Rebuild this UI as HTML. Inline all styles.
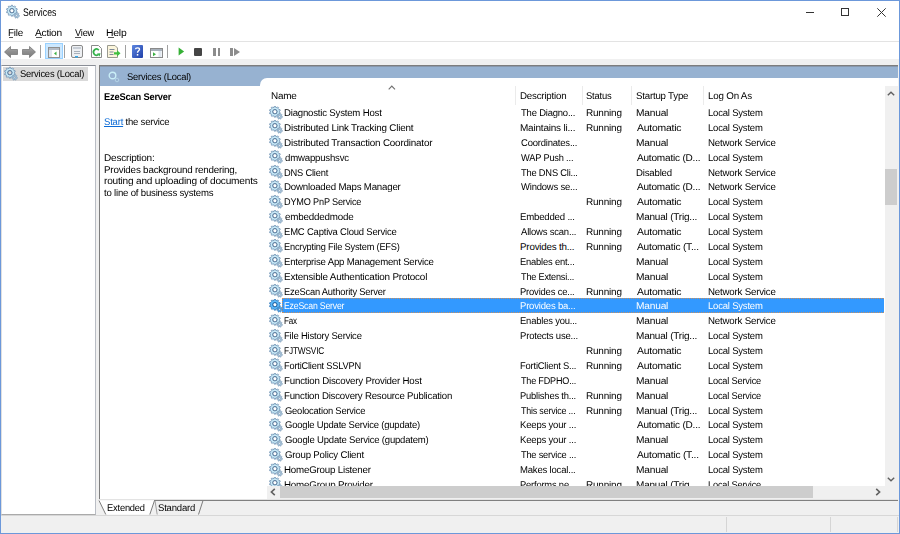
<!DOCTYPE html>
<html><head><meta charset="utf-8">
<style>
*{margin:0;padding:0;box-sizing:border-box}
html,body{width:900px;height:534px;overflow:hidden;background:#f0f0f0}
body{position:relative;font-family:"Liberation Sans",sans-serif;color:#000;font-size:9.8px;letter-spacing:-0.2px;text-rendering:geometricPrecision}
.abs{position:absolute}
svg.abs{overflow:visible}
.t{position:absolute;white-space:nowrap;line-height:1;transform-origin:0 0}
#win{position:absolute;left:0;top:0;width:900px;height:534px;border:1px solid #6c98da}
#title{position:absolute;left:1px;top:1px;width:898px;height:40px;background:#fff}
#tbsep{position:absolute;left:1px;top:41px;width:898px;height:1px;background:#e3e3e3}
#tool{position:absolute;left:1px;top:42px;width:898px;height:17px;background:#fff}
#lp{position:absolute;left:1px;top:65px;width:95px;height:450px;background:#fff;border-top:1px solid #8a8e96;border-left:1px solid #e0e0e0;border-right:1px solid #b9bdc4;border-bottom:1px solid #aaaaaa}
#rp{position:absolute;left:99px;top:65px;width:799px;height:435px;background:#fff;border-top:1px solid #7d7d7d;border-left:1px solid #7d7d7d}
#hdr{position:absolute;left:100px;top:66px;width:798px;height:20px;background:#97b2d1;border-top:1px solid #8898ad}
#listbg{position:absolute;left:260px;top:78px;width:638px;height:20px;background:#fff;border-top-left-radius:7px}
.row{position:absolute;left:266px;width:618px;height:15px}
.row span{position:absolute;top:4px;white-space:nowrap;line-height:1;transform-origin:0 0}
.row .ic{position:absolute;left:3px;top:0.5px;width:14px;height:14px}
.row .ic svg{display:block}
.c0{left:18px}.c1{left:255px}.c2{left:321px}.c3{left:371px}.c4{left:443px}
.row.sel span{color:#fff}
.row.sel .ic svg{filter:url(#tint)}
.row.sel .hl{position:absolute;left:16px;top:0;right:0;height:15px;background:#3399ff;border:1px dotted #c89060;border-right:none}
.colh{position:absolute;top:92px;white-space:nowrap;line-height:1}
.csep{position:absolute;top:86px;width:1px;height:19px;background:#ebebeb}
.tsep{position:absolute;top:45px;width:1px;height:13px;background:#a0a0a0}
.ssep{position:absolute;top:517px;width:1px;height:15px;background:#d5d5d5}
</style></head><body>
<svg width="0" height="0" style="position:absolute">
<defs>
<g id="gear">
 <path d="M5.20 1.26L5.25 0.24L6.55 0.24L6.60 1.26L7.94 1.69L8.59 0.90L9.63 1.66L9.08 2.52L9.91 3.66L10.89 3.40L11.29 4.63L10.34 5.00L10.34 6.40L11.29 6.77L10.89 8.00L9.91 7.74L9.08 8.88L9.63 9.74L8.59 10.50L7.94 9.71L6.60 10.14L6.55 11.16L5.25 11.16L5.20 10.14L3.86 9.71L3.21 10.50L2.17 9.74L2.72 8.88L1.89 7.74L0.91 8.00L0.51 6.77L1.46 6.40L1.46 5.00L0.51 4.63L0.91 3.40L1.89 3.66L2.72 2.52L2.17 1.66L3.21 0.90L3.86 1.69ZM3.90 5.70a2.0 2.0 0 1 0 4.0 0a2.0 2.0 0 1 0 -4.0 0Z" fill="#b2d8ee" fill-rule="evenodd" stroke="#7393b2" stroke-width="0.8"/>
 <circle cx="5.9" cy="5.7" r="2.3" fill="none" stroke="#6582a1" stroke-width="1"/>
 <circle cx="5.9" cy="5.7" r="3.5" fill="none" stroke="#cdeefa" stroke-width="1"/>
 <path d="M10.11 8.26L10.11 7.54L11.09 7.54L11.09 8.26L11.97 8.68L12.53 8.24L13.14 9.00L12.58 9.45L12.80 10.40L13.50 10.56L13.28 11.51L12.58 11.35L11.97 12.12L12.28 12.77L11.40 13.19L11.09 12.54L10.11 12.54L9.80 13.19L8.92 12.77L9.23 12.12L8.62 11.35L7.92 11.51L7.70 10.56L8.40 10.40L8.62 9.45L8.06 9.00L8.67 8.24L9.23 8.68ZM9.70 10.40a0.9 0.9 0 1 0 1.8 0a0.9 0.9 0 1 0 -1.8 0Z" fill="#a3c2da" fill-rule="evenodd" stroke="#7f9db8" stroke-width="0.6"/>
</g>
<filter id="tint" color-interpolation-filters="sRGB"><feColorMatrix type="matrix" values="0.45 0 0 0 0  0 0.78 0 0 0.02  0 0 1 0 0.02  0 0 0 1 0"/></filter>
<linearGradient id="arrg" x1="0" y1="0" x2="0" y2="1"><stop offset="0" stop-color="#b0b0b0"/><stop offset="0.45" stop-color="#909090"/><stop offset="1" stop-color="#7c7c7c"/></linearGradient>
<linearGradient id="helpg" x1="0" y1="0" x2="1" y2="1"><stop offset="0" stop-color="#5d86e0"/><stop offset="1" stop-color="#1f3fa8"/></linearGradient>
</defs></svg>
<div id="win"></div>
<div id="title"></div>
<div id="tbsep"></div>
<div id="tool"></div>
<div id="lp"></div>
<div id="rp"></div>
<div id="hdr"></div>
<div id="listbg"></div>

<!-- title bar -->
<svg class="abs" style="left:6px;top:5px" width="14" height="14" viewBox="0 0 14 14"><use href="#gear"/></svg>
<div class="abs" style="left:806px;top:12px;width:8px;height:1px;background:#333"></div>
<div class="abs" style="left:841px;top:8px;width:8px;height:8px;border:1px solid #333"></div>
<svg class="abs" style="left:877px;top:8px" width="9" height="9" viewBox="0 0 9 9"><path d="M0.3 0.3L8.7 8.7M8.7 0.3L0.3 8.7" stroke="#333" stroke-width="1"/></svg>

<!-- menu -->
<div class="abs" style="left:9px;top:37px;width:4px;height:1px;background:#555"></div>
<div class="abs" style="left:35.5px;top:37px;width:6px;height:1px;background:#555"></div>
<div class="abs" style="left:75px;top:37px;width:6px;height:1px;background:#555"></div>
<div class="abs" style="left:107.5px;top:37px;width:6px;height:1px;background:#555"></div>

<!-- toolbar -->
<svg class="abs" style="left:4px;top:46px" width="14" height="12" viewBox="0 0 14 12"><path d="M0.5 6L6.5 0.5V3.5H13.5V8.5H6.5V11.5Z" fill="url(#arrg)" stroke="#6e6e6e" stroke-width="0.7"/></svg>
<svg class="abs" style="left:22px;top:46px" width="14" height="12" viewBox="0 0 14 12"><path d="M13.5 6L7.5 0.5V3.5H0.5V8.5H7.5V11.5Z" fill="url(#arrg)" stroke="#6e6e6e" stroke-width="0.7"/></svg>
<div class="tsep" style="left:40px"></div>
<div class="abs" style="left:45px;top:43px;width:18px;height:16px;background:#cce8ff;border:1px solid #99d1ff"></div>
<svg class="abs" style="left:48px;top:47px" width="12" height="11" viewBox="0 0 12 11"><rect x="0.5" y="0.5" width="11" height="10" fill="#fff" stroke="#8f8f8f"/><rect x="1" y="1" width="10" height="2" fill="#b4bcc6"/><rect x="1" y="3" width="3" height="7" fill="#dfe6ee"/><path d="M6 6.5L8.5 4.5V8.5Z" fill="#3cb043"/></svg>
<div class="tsep" style="left:64px"></div>
<svg class="abs" style="left:71px;top:45px" width="12" height="13" viewBox="0 0 12 13"><rect x="0.5" y="0.5" width="11" height="12" rx="1.5" fill="#eef0f3" stroke="#8a8a8a"/><rect x="2" y="2" width="8" height="2" fill="#c8ced6"/><rect x="3" y="6" width="6" height="1" fill="#a9b1bb"/><rect x="3" y="8" width="6" height="1" fill="#a9b1bb"/><rect x="4" y="11" width="3" height="1.5" fill="#38a8e8"/></svg>
<svg class="abs" style="left:91px;top:45px" width="11" height="13" viewBox="0 0 11 13"><path d="M0.5 0.5H7.5L10.5 3.5V12.5H0.5Z" fill="#fff" stroke="#8a8a8a"/><path d="M7.8 5.2A3 3 0 1 0 7.2 9.6" fill="none" stroke="#33b24a" stroke-width="1.7"/><path d="M6 8.5L9.5 8.3L8.6 11.5Z" fill="#33b24a"/></svg>
<svg class="abs" style="left:107px;top:45px" width="14" height="13" viewBox="0 0 14 13"><path d="M0.5 0.5H8L10.5 3V12.5H0.5Z" fill="#fbf5dc" stroke="#9a9a90"/><rect x="2.5" y="4" width="5" height="1" fill="#7e8a9a"/><rect x="2.5" y="6.5" width="4" height="1" fill="#7e8a9a"/><rect x="2.5" y="9" width="4" height="1" fill="#7e8a9a"/><path d="M7 7.2H10V5.2L13.5 8.3L10 11.4V9.4H7Z" fill="#3fbf3f"/></svg>
<div class="tsep" style="left:125px"></div>
<svg class="abs" style="left:132px;top:45px" width="11" height="13" viewBox="0 0 11 13"><rect x="0" y="0" width="11" height="13" rx="1" fill="url(#helpg)"/><path d="M3.5 4.2C3.5 2.5 7.5 2.3 7.5 4.3C7.5 5.8 5.5 5.9 5.5 7.8" fill="none" stroke="#fff" stroke-width="1.4"/><rect x="4.8" y="9" width="1.5" height="1.6" fill="#fff"/></svg>
<svg class="abs" style="left:150px;top:48px" width="13" height="10" viewBox="0 0 13 10"><rect x="0.5" y="0.5" width="12" height="9" fill="#fff" stroke="#8a8a8a"/><rect x="1" y="1" width="11" height="2" fill="#a7b0ba"/><rect x="8.5" y="3" width="3" height="6" fill="#dfe6ee"/><path d="M3 4.3L6 6.3L3 8.3Z" fill="#3cb043"/></svg>
<div class="tsep" style="left:167px"></div>
<svg class="abs" style="left:178px;top:47px" width="7" height="9" viewBox="0 0 7 9"><path d="M0.6 0.6L6.1 4.5L0.6 8.4Z" fill="#35b035"/></svg>
<div class="abs" style="left:194px;top:47.5px;width:8px;height:8px;background:#454545;border-radius:1px"></div>
<div class="abs" style="left:213px;top:47.5px;width:2.5px;height:8px;background:#8c8c8c"></div>
<div class="abs" style="left:217.5px;top:47.5px;width:2.5px;height:8px;background:#8c8c8c"></div>
<div class="abs" style="left:230px;top:47.5px;width:2.5px;height:8px;background:#8c8c8c"></div>
<svg class="abs" style="left:233.5px;top:47.5px" width="7" height="8" viewBox="0 0 7 8"><path d="M0 0L6 4L0 8Z" fill="#8c8c8c"/></svg>

<!-- left pane -->
<div class="abs" style="left:3px;top:67px;width:85px;height:14px;background:#d9d9d9"></div>
<svg class="abs" style="left:4px;top:67px" width="14" height="14" viewBox="0 0 14 14"><use href="#gear"/></svg>

<!-- right header -->
<svg class="abs" style="left:108px;top:71px" width="12" height="12" viewBox="0 0 12 12"><circle cx="4.5" cy="4.5" r="3.3" fill="none" stroke="#c9eef7" stroke-width="1.4"/><circle cx="9" cy="9" r="1.8" fill="none" stroke="#b4d3e6" stroke-width="1"/></svg>

<!-- description pane -->

<!-- column headers -->
<svg class="abs" style="left:388px;top:85px" width="8" height="5" viewBox="0 0 8 5"><path d="M0.7 4.3L3.8 1L7 4.3" fill="none" stroke="#707070" stroke-width="1.1"/></svg>
<div class="csep" style="left:515px"></div>
<div class="csep" style="left:582px"></div>
<div class="csep" style="left:631px"></div>
<div class="csep" style="left:703px"></div>

<!-- list rows -->
<div class="abs" style="left:0;top:0;width:885px;height:486px;overflow:hidden;clip-path:inset(98px 0 0 0)">
<div class="row" style="top:105.000px"><i class="ic"><svg width="14" height="14" viewBox="0 0 14 14"><use href="#gear"/></svg></i><span style="left:17.62px;transform:scaleX(0.980)">Diagnostic System Host</span><span style="left:255.00px;transform:scaleX(0.964)">The Diagno...</span><span style="left:320.38px;transform:scaleX(1.018)">Running</span><span style="left:369.76px;transform:scaleX(1.040)">Manual</span><span style="left:442.13px;transform:scaleX(0.969)">Local System</span></div>
<div class="row" style="top:119.875px"><i class="ic"><svg width="14" height="14" viewBox="0 0 14 14"><use href="#gear"/></svg></i><span style="left:17.60px;transform:scaleX(1.005)">Distributed Link Tracking Client</span><span style="left:253.98px;transform:scaleX(1.019)">Maintains li...</span><span style="left:320.38px;transform:scaleX(1.018)">Running</span><span style="left:370.80px;transform:scaleX(1.061)">Automatic</span><span style="left:442.13px;transform:scaleX(0.969)">Local System</span></div>
<div class="row" style="top:134.750px"><i class="ic"><svg width="14" height="14" viewBox="0 0 14 14"><use href="#gear"/></svg></i><span style="left:17.59px;transform:scaleX(1.008)">Distributed Transaction Coordinator</span><span style="left:255.00px;transform:scaleX(0.966)">Coordinates...</span><span style="left:369.76px;transform:scaleX(1.040)">Manual</span><span style="left:442.11px;transform:scaleX(0.990)">Network Service</span></div>
<div class="row" style="top:149.625px"><i class="ic"><svg width="14" height="14" viewBox="0 0 14 14"><use href="#gear"/></svg></i><span style="left:18.60px;transform:scaleX(0.982)">dmwappushsvc</span><span style="left:255.00px;transform:scaleX(0.945)">WAP Push ...</span><span style="left:370.80px;transform:scaleX(1.025)">Automatic (D...</span><span style="left:442.13px;transform:scaleX(0.969)">Local System</span></div>
<div class="row" style="top:164.500px"><i class="ic"><svg width="14" height="14" viewBox="0 0 14 14"><use href="#gear"/></svg></i><span style="left:17.65px;transform:scaleX(0.948)">DNS Client</span><span style="left:255.00px;transform:scaleX(0.949)">The DNS Cli...</span><span style="left:369.82px;transform:scaleX(0.983)">Disabled</span><span style="left:442.11px;transform:scaleX(0.990)">Network Service</span></div>
<div class="row" style="top:179.375px"><i class="ic"><svg width="14" height="14" viewBox="0 0 14 14"><use href="#gear"/></svg></i><span style="left:17.61px;transform:scaleX(0.989)">Downloaded Maps Manager</span><span style="left:255.00px;transform:scaleX(0.966)">Windows se...</span><span style="left:370.80px;transform:scaleX(1.025)">Automatic (D...</span><span style="left:442.11px;transform:scaleX(0.990)">Network Service</span></div>
<div class="row" style="top:194.250px"><i class="ic"><svg width="14" height="14" viewBox="0 0 14 14"><use href="#gear"/></svg></i><span style="left:17.67px;transform:scaleX(0.934)">DYMO PnP Service</span><span style="left:320.38px;transform:scaleX(1.018)">Running</span><span style="left:370.80px;transform:scaleX(1.061)">Automatic</span><span style="left:442.13px;transform:scaleX(0.969)">Local System</span></div>
<div class="row" style="top:209.125px"><i class="ic"><svg width="14" height="14" viewBox="0 0 14 14"><use href="#gear"/></svg></i><span style="left:18.60px;transform:scaleX(1.001)">embeddedmode</span><span style="left:254.02px;transform:scaleX(0.981)">Embedded ...</span><span style="left:369.78px;transform:scaleX(1.022)">Manual (Trig...</span><span style="left:442.13px;transform:scaleX(0.969)">Local System</span></div>
<div class="row" style="top:224.000px"><i class="ic"><svg width="14" height="14" viewBox="0 0 14 14"><use href="#gear"/></svg></i><span style="left:17.63px;transform:scaleX(0.967)">EMC Captiva Cloud Service</span><span style="left:255.00px;transform:scaleX(0.968)">Allows scan...</span><span style="left:320.38px;transform:scaleX(1.018)">Running</span><span style="left:370.80px;transform:scaleX(1.061)">Automatic</span><span style="left:442.13px;transform:scaleX(0.969)">Local System</span></div>
<div class="row" style="top:238.875px"><i class="ic"><svg width="14" height="14" viewBox="0 0 14 14"><use href="#gear"/></svg></i><span style="left:17.66px;transform:scaleX(0.941)">Encrypting File System (EFS)</span><span style="left:254.00px;transform:scaleX(1.000)">Provides th...</span><span style="left:320.38px;transform:scaleX(1.018)">Running</span><span style="left:370.80px;transform:scaleX(1.037)">Automatic (T...</span><span style="left:442.13px;transform:scaleX(0.969)">Local System</span></div>
<div class="row" style="top:253.750px"><i class="ic"><svg width="14" height="14" viewBox="0 0 14 14"><use href="#gear"/></svg></i><span style="left:17.62px;transform:scaleX(0.979)">Enterprise App Management Service</span><span style="left:254.04px;transform:scaleX(0.955)">Enables ent...</span><span style="left:369.76px;transform:scaleX(1.040)">Manual</span><span style="left:442.13px;transform:scaleX(0.969)">Local System</span></div>
<div class="row" style="top:268.625px"><i class="ic"><svg width="14" height="14" viewBox="0 0 14 14"><use href="#gear"/></svg></i><span style="left:17.59px;transform:scaleX(1.013)">Extensible Authentication Protocol</span><span style="left:255.00px;transform:scaleX(0.930)">The Extensi...</span><span style="left:369.76px;transform:scaleX(1.040)">Manual</span><span style="left:442.13px;transform:scaleX(0.969)">Local System</span></div>
<div class="row" style="top:283.500px"><i class="ic"><svg width="14" height="14" viewBox="0 0 14 14"><use href="#gear"/></svg></i><span style="left:17.65px;transform:scaleX(0.951)">EzeScan Authority Server</span><span style="left:254.04px;transform:scaleX(0.964)">Provides ce...</span><span style="left:320.38px;transform:scaleX(1.018)">Running</span><span style="left:370.80px;transform:scaleX(1.061)">Automatic</span><span style="left:442.11px;transform:scaleX(0.990)">Network Service</span></div>
<div class="row sel" style="top:298.375px"><b class="hl"></b><i class="ic"><svg width="14" height="14" viewBox="0 0 14 14"><use href="#gear"/></svg></i><span style="left:17.71px;transform:scaleX(0.887)">EzeScan Server</span><span style="left:254.03px;transform:scaleX(0.971)">Provides ba...</span><span style="left:369.76px;transform:scaleX(1.040)">Manual</span><span style="left:442.13px;transform:scaleX(0.969)">Local System</span></div>
<div class="row" style="top:313.250px"><i class="ic"><svg width="14" height="14" viewBox="0 0 14 14"><use href="#gear"/></svg></i><span style="left:17.77px;transform:scaleX(0.827)">Fax</span><span style="left:254.04px;transform:scaleX(0.962)">Enables you...</span><span style="left:369.76px;transform:scaleX(1.040)">Manual</span><span style="left:442.11px;transform:scaleX(0.990)">Network Service</span></div>
<div class="row" style="top:328.125px"><i class="ic"><svg width="14" height="14" viewBox="0 0 14 14"><use href="#gear"/></svg></i><span style="left:17.63px;transform:scaleX(0.967)">File History Service</span><span style="left:254.03px;transform:scaleX(0.972)">Protects use...</span><span style="left:369.78px;transform:scaleX(1.022)">Manual (Trig...</span><span style="left:442.13px;transform:scaleX(0.969)">Local System</span></div>
<div class="row" style="top:343.000px"><i class="ic"><svg width="14" height="14" viewBox="0 0 14 14"><use href="#gear"/></svg></i><span style="left:17.75px;transform:scaleX(0.848)">FJTWSVIC</span><span style="left:320.38px;transform:scaleX(1.018)">Running</span><span style="left:370.80px;transform:scaleX(1.061)">Automatic</span><span style="left:442.13px;transform:scaleX(0.969)">Local System</span></div>
<div class="row" style="top:357.875px"><i class="ic"><svg width="14" height="14" viewBox="0 0 14 14"><use href="#gear"/></svg></i><span style="left:17.66px;transform:scaleX(0.942)">FortiClient SSLVPN</span><span style="left:254.04px;transform:scaleX(0.956)">FortiClient S...</span><span style="left:320.38px;transform:scaleX(1.018)">Running</span><span style="left:370.80px;transform:scaleX(1.061)">Automatic</span><span style="left:442.13px;transform:scaleX(0.969)">Local System</span></div>
<div class="row" style="top:372.750px"><i class="ic"><svg width="14" height="14" viewBox="0 0 14 14"><use href="#gear"/></svg></i><span style="left:17.61px;transform:scaleX(0.991)">Function Discovery Provider Host</span><span style="left:255.00px;transform:scaleX(0.924)">The FDPHO...</span><span style="left:369.76px;transform:scaleX(1.040)">Manual</span><span style="left:442.16px;transform:scaleX(0.944)">Local Service</span></div>
<div class="row" style="top:387.625px"><i class="ic"><svg width="14" height="14" viewBox="0 0 14 14"><use href="#gear"/></svg></i><span style="left:17.62px;transform:scaleX(0.984)">Function Discovery Resource Publication</span><span style="left:254.04px;transform:scaleX(0.956)">Publishes th...</span><span style="left:320.38px;transform:scaleX(1.018)">Running</span><span style="left:369.76px;transform:scaleX(1.040)">Manual</span><span style="left:442.16px;transform:scaleX(0.944)">Local Service</span></div>
<div class="row" style="top:402.500px"><i class="ic"><svg width="14" height="14" viewBox="0 0 14 14"><use href="#gear"/></svg></i><span style="left:18.60px;transform:scaleX(0.957)">Geolocation Service</span><span style="left:255.00px;transform:scaleX(0.908)">This service ...</span><span style="left:320.38px;transform:scaleX(1.018)">Running</span><span style="left:369.78px;transform:scaleX(1.022)">Manual (Trig...</span><span style="left:442.13px;transform:scaleX(0.969)">Local System</span></div>
<div class="row" style="top:417.375px"><i class="ic"><svg width="14" height="14" viewBox="0 0 14 14"><use href="#gear"/></svg></i><span style="left:18.60px;transform:scaleX(0.966)">Google Update Service (gupdate)</span><span style="left:254.03px;transform:scaleX(0.973)">Keeps your ...</span><span style="left:370.80px;transform:scaleX(1.025)">Automatic (D...</span><span style="left:442.13px;transform:scaleX(0.969)">Local System</span></div>
<div class="row" style="top:432.250px"><i class="ic"><svg width="14" height="14" viewBox="0 0 14 14"><use href="#gear"/></svg></i><span style="left:18.60px;transform:scaleX(0.972)">Google Update Service (gupdatem)</span><span style="left:254.03px;transform:scaleX(0.973)">Keeps your ...</span><span style="left:369.76px;transform:scaleX(1.040)">Manual</span><span style="left:442.13px;transform:scaleX(0.969)">Local System</span></div>
<div class="row" style="top:447.125px"><i class="ic"><svg width="14" height="14" viewBox="0 0 14 14"><use href="#gear"/></svg></i><span style="left:18.60px;transform:scaleX(0.986)">Group Policy Client</span><span style="left:255.00px;transform:scaleX(0.940)">The service ...</span><span style="left:370.80px;transform:scaleX(1.037)">Automatic (T...</span><span style="left:442.13px;transform:scaleX(0.969)">Local System</span></div>
<div class="row" style="top:462.000px"><i class="ic"><svg width="14" height="14" viewBox="0 0 14 14"><use href="#gear"/></svg></i><span style="left:17.61px;transform:scaleX(0.994)">HomeGroup Listener</span><span style="left:254.03px;transform:scaleX(0.973)">Makes local...</span><span style="left:369.76px;transform:scaleX(1.040)">Manual</span><span style="left:442.13px;transform:scaleX(0.969)">Local System</span></div>
<div class="row" style="top:476.875px"><i class="ic"><svg width="14" height="14" viewBox="0 0 14 14"><use href="#gear"/></svg></i><span style="left:17.60px;transform:scaleX(0.997)">HomeGroup Provider</span><span style="left:254.04px;transform:scaleX(0.956)">Performs ne...</span><span style="left:320.38px;transform:scaleX(1.018)">Running</span><span style="left:369.78px;transform:scaleX(1.022)">Manual (Trig...</span><span style="left:442.16px;transform:scaleX(0.944)">Local Service</span></div>
</div>

<!-- vertical scrollbar -->
<div class="abs" style="left:885px;top:86px;width:13px;height:414px;background:#f0f0f0"></div>
<div class="abs" style="left:885px;top:169px;width:12px;height:36px;background:#cdcdcd"></div>
<svg class="abs" style="left:887px;top:91px" width="8" height="5" viewBox="0 0 8 5"><path d="M0.8 4.3L4 1.2L7.2 4.3" fill="none" stroke="#606060" stroke-width="1.4"/></svg>
<svg class="abs" style="left:887px;top:476.5px" width="8" height="5" viewBox="0 0 8 5"><path d="M0.8 0.7L4 3.8L7.2 0.7" fill="none" stroke="#606060" stroke-width="1.4"/></svg>
<!-- horizontal scrollbar -->
<div class="abs" style="left:267px;top:486px;width:618px;height:13px;background:#f0f0f0"></div>
<div class="abs" style="left:280px;top:486px;width:533px;height:12px;background:#cdcdcd"></div>
<svg class="abs" style="left:270px;top:488px" width="6" height="8" viewBox="0 0 6 8"><path d="M4.8 0.9L1.4 4L4.8 7.1" fill="none" stroke="#606060" stroke-width="1.6"/></svg>
<svg class="abs" style="left:875px;top:488px" width="6" height="8" viewBox="0 0 6 8"><path d="M1.2 0.9L4.6 4L1.2 7.1" fill="none" stroke="#606060" stroke-width="1.6"/></svg>

<!-- tabs -->
<div class="abs" style="left:98px;top:499px;width:800px;height:16px;background:#f0f0f0"></div>
<div class="abs" style="left:99px;top:499px;width:799px;height:1px;background:#e3e3e3"></div>
<svg class="abs" style="left:98px;top:499px" width="110" height="17" viewBox="0 0 110 17">
 <path d="M1 1.5L7.5 15.5H52L56.5 1.5Z" fill="#fff"/>
 <path d="M56.5 1.5L59 15.5H100.5L105 1.5Z" fill="#f0f0f0"/>
 <path d="M1 1.5L7.8 15.5" stroke="#6e6e6e" stroke-width="0.9" fill="none"/>
 <path d="M56.5 1.5L51.8 15.5" stroke="#6e6e6e" stroke-width="0.9" fill="none"/>
 <path d="M57 1.8L59.2 15.5" stroke="#8a8a8a" stroke-width="0.8" fill="none"/>
 <path d="M105 1.5L100.5 15.5" stroke="#6e6e6e" stroke-width="0.9" fill="none"/>
</svg>
<div class="abs" style="left:154px;top:500px;width:744px;height:1px;background:#808080"></div>

<!-- status bar -->
<div class="abs" style="left:1px;top:515px;width:898px;height:1px;background:#d7d7d7"></div>
<div class="ssep" style="left:726px"></div>
<div class="ssep" style="left:830px"></div>
<div class="ssep" style="left:897px"></div>
<div class="t" style="left:22.91px;top:8px;transform:scaleX(0.790);font-size:11px;letter-spacing:0">Services</div>
<div class="t" style="left:7.89px;top:29px;transform:scaleX(1.007);">File</div>
<div class="t" style="left:35.40px;top:29px;transform:scaleX(1.038);">Action</div>
<div class="t" style="left:75.00px;top:29px;transform:scaleX(0.943);">View</div>
<div class="t" style="left:106.34px;top:29px;transform:scaleX(1.061);">Help</div>
<div class="t" style="left:20.14px;top:70px;transform:scaleX(0.956);">Services (Local)</div>
<div class="t" style="left:126.85px;top:73px;transform:scaleX(0.955);">Services (Local)</div>
<div class="t" style="left:103.75px;top:93px;transform:scaleX(0.951);font-weight:bold">EzeScan Server</div>
<div class="t" style="left:104.20px;top:118px;transform:scaleX(0.969);"><span style="color:#0c6bd6;text-decoration:underline">Start</span> the service</div>
<div class="t" style="left:103.58px;top:154px;transform:scaleX(1.023);">Description:</div>
<div class="t" style="left:103.60px;top:165.6px;transform:scaleX(1.002);">Provides background rendering,</div>
<div class="t" style="left:103.97px;top:177.2px;transform:scaleX(1.031);">routing and uploading of documents</div>
<div class="t" style="left:104.00px;top:188.8px;transform:scaleX(0.979);">to line of business systems</div>
<div class="t" style="left:270.99px;top:92px;transform:scaleX(1.013);">Name</div>
<div class="t" style="left:520.21px;top:92px;transform:scaleX(0.993);">Description</div>
<div class="t" style="left:586.14px;top:92px;transform:scaleX(0.958);">Status</div>
<div class="t" style="left:635.91px;top:92px;transform:scaleX(0.987);">Startup Type</div>
<div class="t" style="left:707.50px;top:92px;transform:scaleX(0.998);">Log On As</div>
<div class="t" style="left:107.35px;top:504px;transform:scaleX(0.951);">Extended</div>
<div class="t" style="left:157.73px;top:504px;transform:scaleX(0.973);">Standard</div>
</body></html>
